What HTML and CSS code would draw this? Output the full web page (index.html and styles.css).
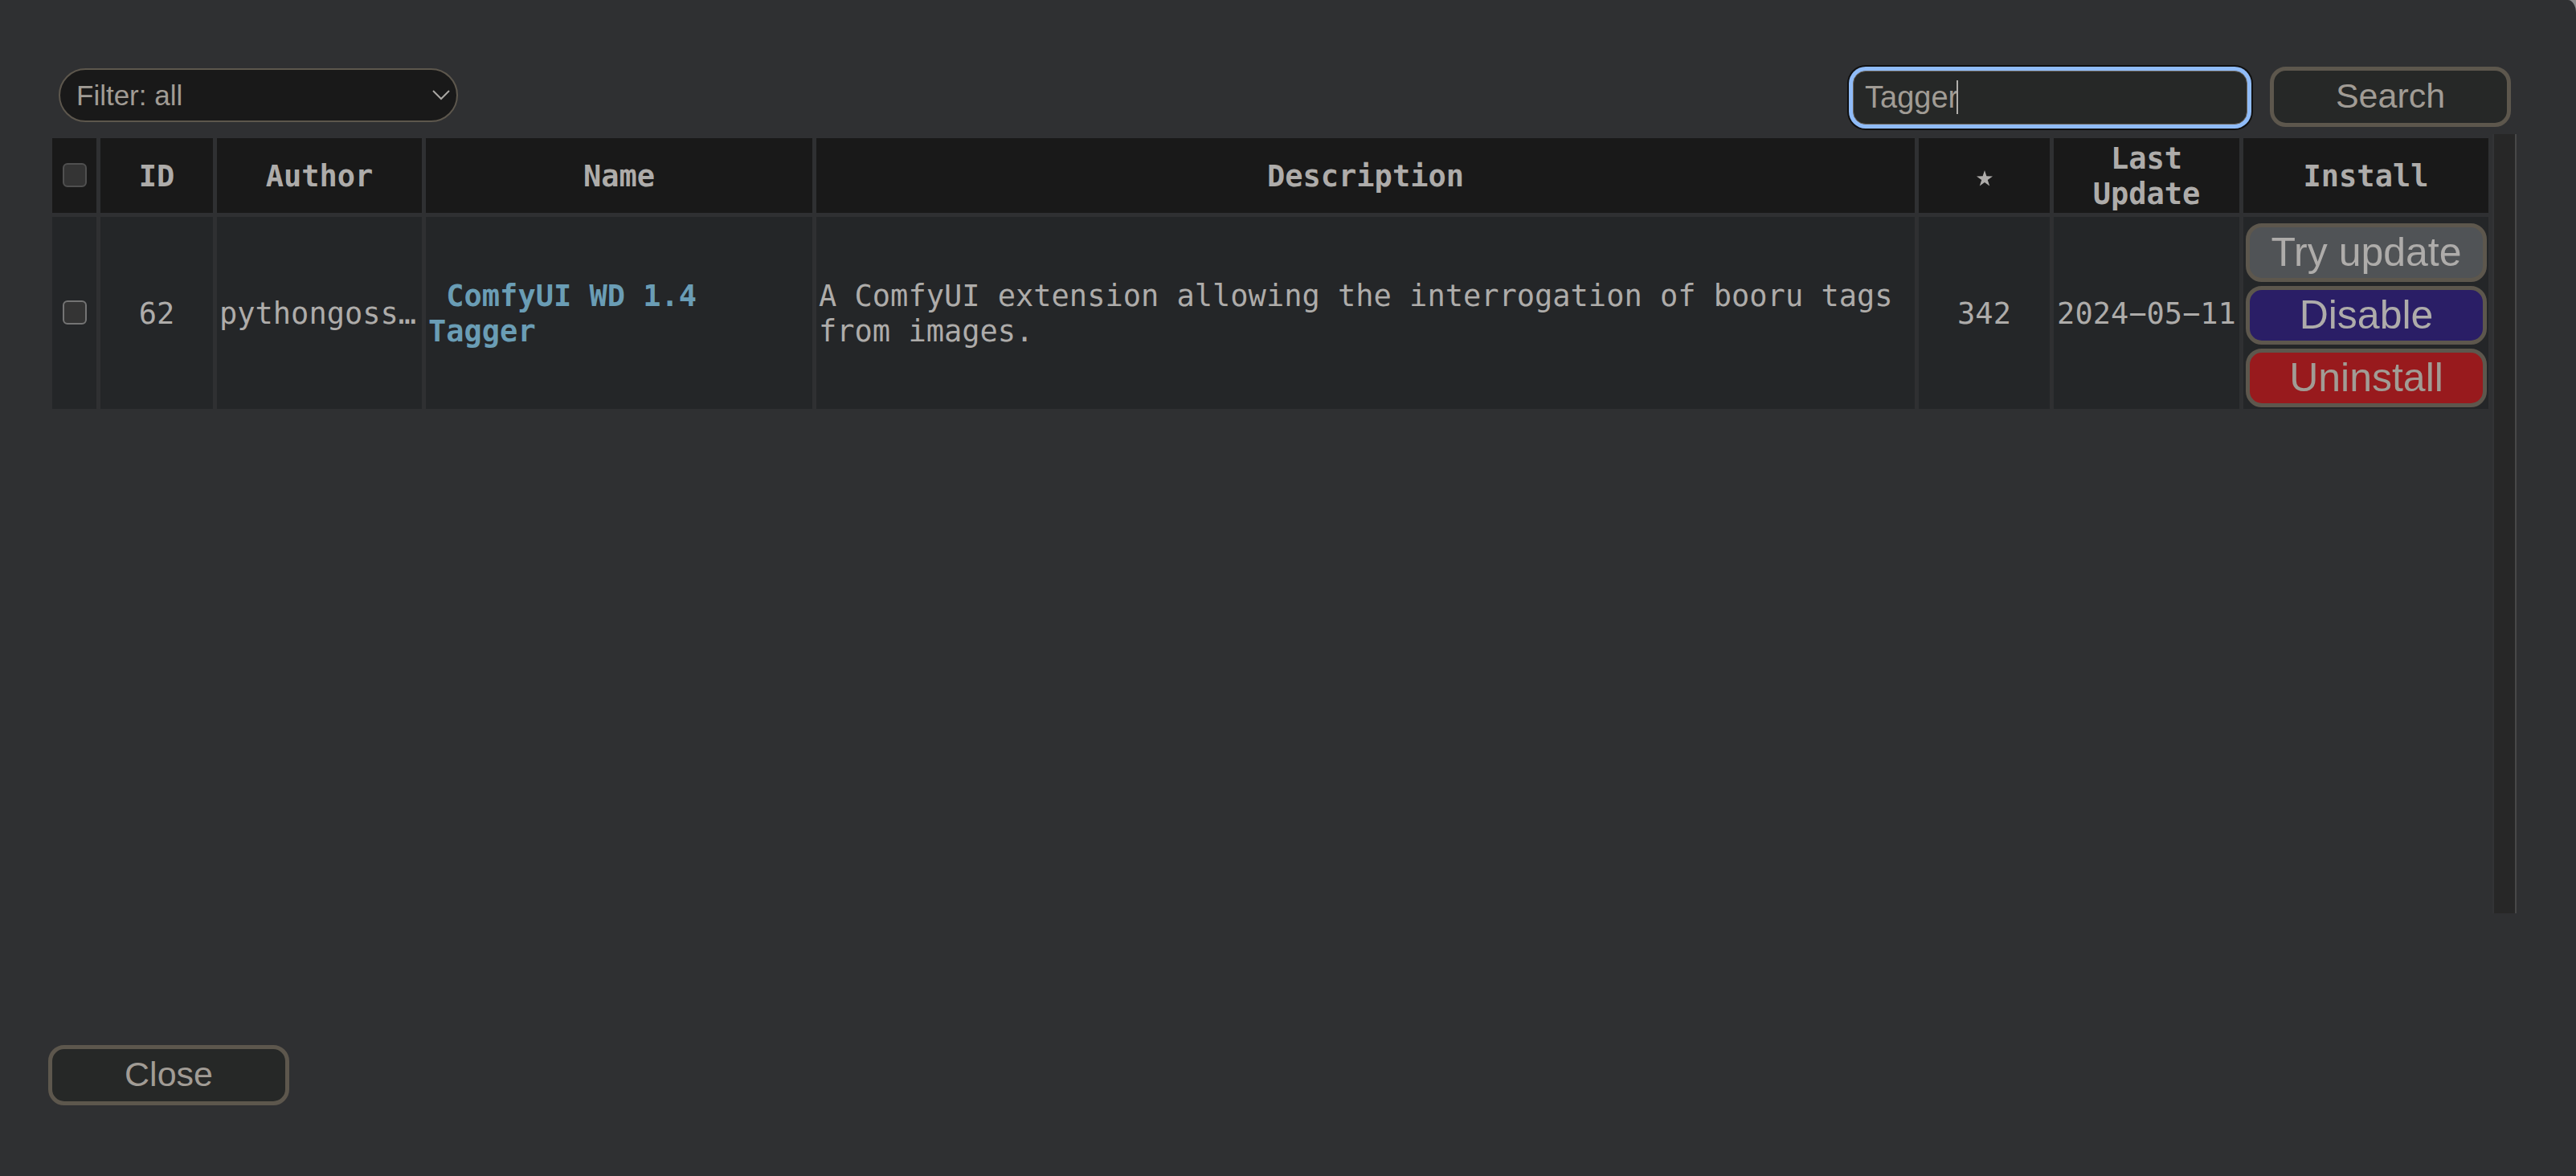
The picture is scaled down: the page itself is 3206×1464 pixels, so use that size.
FILE: index.html
```
<!DOCTYPE html>
<html lang="en">
<head>
<meta charset="utf-8">
<title>Custom Nodes</title>
<link rel="stylesheet" href="styles.css">
</head>
<body>
<main class="dialog">
  <div class="toolbar">
    <div class="filter">
      <select class="filter-select" aria-label="Filter">
        <option>Filter: all</option>
      </select>
      <svg class="filter-arrow" viewBox="0 0 22 13" aria-hidden="true"><path d="M1 1 L11 11 L21 1" fill="none" stroke="currentColor" stroke-width="2"/></svg>
    </div>
    <div class="search">
      <input class="search-input" type="text" value="Tagger" aria-label="Search nodes">
      <span class="caret"></span>
    </div>
    <button class="button" type="button">Search</button>
  </div>
  <div class="grid">
    <div class="grid-body">
      <table class="nodes">
        <colgroup>
          <col class="col-check"><col class="col-id"><col class="col-author"><col class="col-name"><col>
          <col class="col-stars"><col class="col-date"><col class="col-install">
        </colgroup>
        <thead>
          <tr>
            <th><input class="check" type="checkbox" aria-label="Select all"></th>
            <th>ID</th>
            <th>Author</th>
            <th>Name</th>
            <th>Description</th>
            <th><svg class="star" viewBox="0 0 20 20" role="img" aria-label="Stars"><path d="M10 0 L12.4 7.3 L20 7.4 L13.8 12 L16.2 19.6 L10 15 L3.8 19.6 L6.2 12 L0 7.4 L7.6 7.3 Z" fill="currentColor"/></svg></th>
            <th>Last Update</th>
            <th>Install</th>
          </tr>
        </thead>
        <tbody>
          <tr>
            <td class="center"><input class="check check-row" type="checkbox" aria-label="Select ComfyUI WD 1.4 Tagger"></td>
            <td class="center">62</td>
            <td class="author">pythongoss…</td>
            <td class="name">&nbsp;<a href="#">ComfyUI WD 1.4 Tagger</a></td>
            <td>A ComfyUI extension allowing the interrogation of booru tags from images.</td>
            <td class="center">342</td>
            <td class="center date">2024−05−11</td>
            <td class="actions-cell">
              <div class="actions">
                <button class="action update" type="button">Try update</button>
                <button class="action disable" type="button">Disable</button>
                <button class="action uninstall" type="button">Uninstall</button>
              </div>
            </td>
          </tr>
        </tbody>
      </table>
    </div>
    <div class="track"></div>
  </div>
  <div class="footer">
    <button class="button" type="button">Close</button>
  </div>
</main>
</body>
</html>
```
FILE: styles.css
```
* {
  box-sizing: border-box;
}

html {
  background: #8c8c8c;
}

body {
  margin: 0;
  font-family: "Liberation Sans", Arial, sans-serif;
  color: #aeacaa;
}

.dialog {
  min-height: 100vh;
  padding: 83px 74px 88px 60px;
  background: #2f3032;
  border-top-right-radius: 10px 16px;
}

.toolbar {
  display: flex;
  align-items: center;
  height: 75px;
  padding: 0 7px 0 13px;
}

.filter {
  position: relative;
  width: 497px;
  margin-right: auto;
  margin-bottom: 4px;
}

.filter-select {
  display: block;
  appearance: none;
  width: 100%;
  height: 67px;
  padding: 0 20px;
  border: 2px solid #5d574d;
  border-radius: 34px;
  background: #191919;
  color: #a19c95;
  font: 35px "Liberation Sans", Arial, sans-serif;
}

.filter-arrow {
  position: absolute;
  right: 10px;
  top: 27px;
  width: 22px;
  height: 13px;
  color: #a9a7a3;
}

.search {
  position: relative;
  width: 491px;
  margin-top: 2px;
  margin-right: 28px;
}

.search-input {
  display: block;
  width: 100%;
  height: 67px;
  padding: 0 14px;
  border: 1px solid #6b655b;
  border-radius: 16px;
  outline: none;
  box-shadow: 0 0 0 5px #90bcf8, 0 0 0 7px #101010;
  background: #262827;
  color: #a19c95;
  font: 38px "Liberation Sans", Arial, sans-serif;
}

.caret {
  position: absolute;
  left: 129px;
  top: 12px;
  width: 2px;
  height: 42px;
  background: #b0aeaa;
}

.button {
  width: 300px;
  height: 75px;
  padding: 0 0 2px;
  border: 5px solid #5d574d;
  border-radius: 20px;
  background: #262827;
  color: #a19c95;
  font: 43px "Liberation Sans", Arial, sans-serif;
}

.grid {
  display: flex;
  height: 970px;
  margin-top: 9px;
}

.grid-body {
  flex: 1;
  min-width: 0;
}

.track {
  width: 30px;
  border-left: 2px solid #333436;
  border-right: 2px solid #484848;
  background: #272727;
}

.nodes {
  table-layout: fixed;
  width: 100%;
  border-spacing: 5px;
  font: 37px/44px "DejaVu Sans Mono", Menlo, monospace;
}

.col-check { width: 55px; }
.col-id { width: 140px; }
.col-author { width: 255px; }
.col-name { width: 481px; }
.col-stars { width: 163px; }
.col-date { width: 231px; }
.col-install { width: 305px; }

.nodes th {
  height: 93px;
  padding: 3px 2px 1px;
  background: #191919;
  font-weight: bold;
}

.nodes td {
  padding: 3px 3px 1px;
  background: #242628;
}

.nodes td.center {
  text-align: center;
}

.nodes td.author,
.nodes td.date {
  white-space: nowrap;
}

.name {
  font-weight: bold;
}

.name a {
  color: #6a9db5;
  text-decoration: none;
}

.star {
  display: inline-block;
  width: 20px;
  height: 20px;
}

.check {
  display: block;
  appearance: none;
  width: 30px;
  height: 30px;
  margin: 0 auto 4px;
  border: 2px solid #505050;
  border-radius: 6px;
  background: #343434;
}

.check-row {
  border-color: #747474;
}

.nodes td.actions-cell {
  padding: 8px 2px 2px 3px;
}

.actions {
  display: flex;
  flex-direction: column;
  gap: 5px;
}

.action {
  height: 73px;
  padding: 0 0 2px;
  border: 5px solid #5d574d;
  border-radius: 20px;
  color: #aeacaa;
  font: 50px "Liberation Sans", Arial, sans-serif;
}

.update { background: #505356; }
.disable { background: #2a1e66; }

.uninstall {
  background: #981a1d;
  color: #a19c95;
}

.footer {
  margin-top: 164px;
}
```
